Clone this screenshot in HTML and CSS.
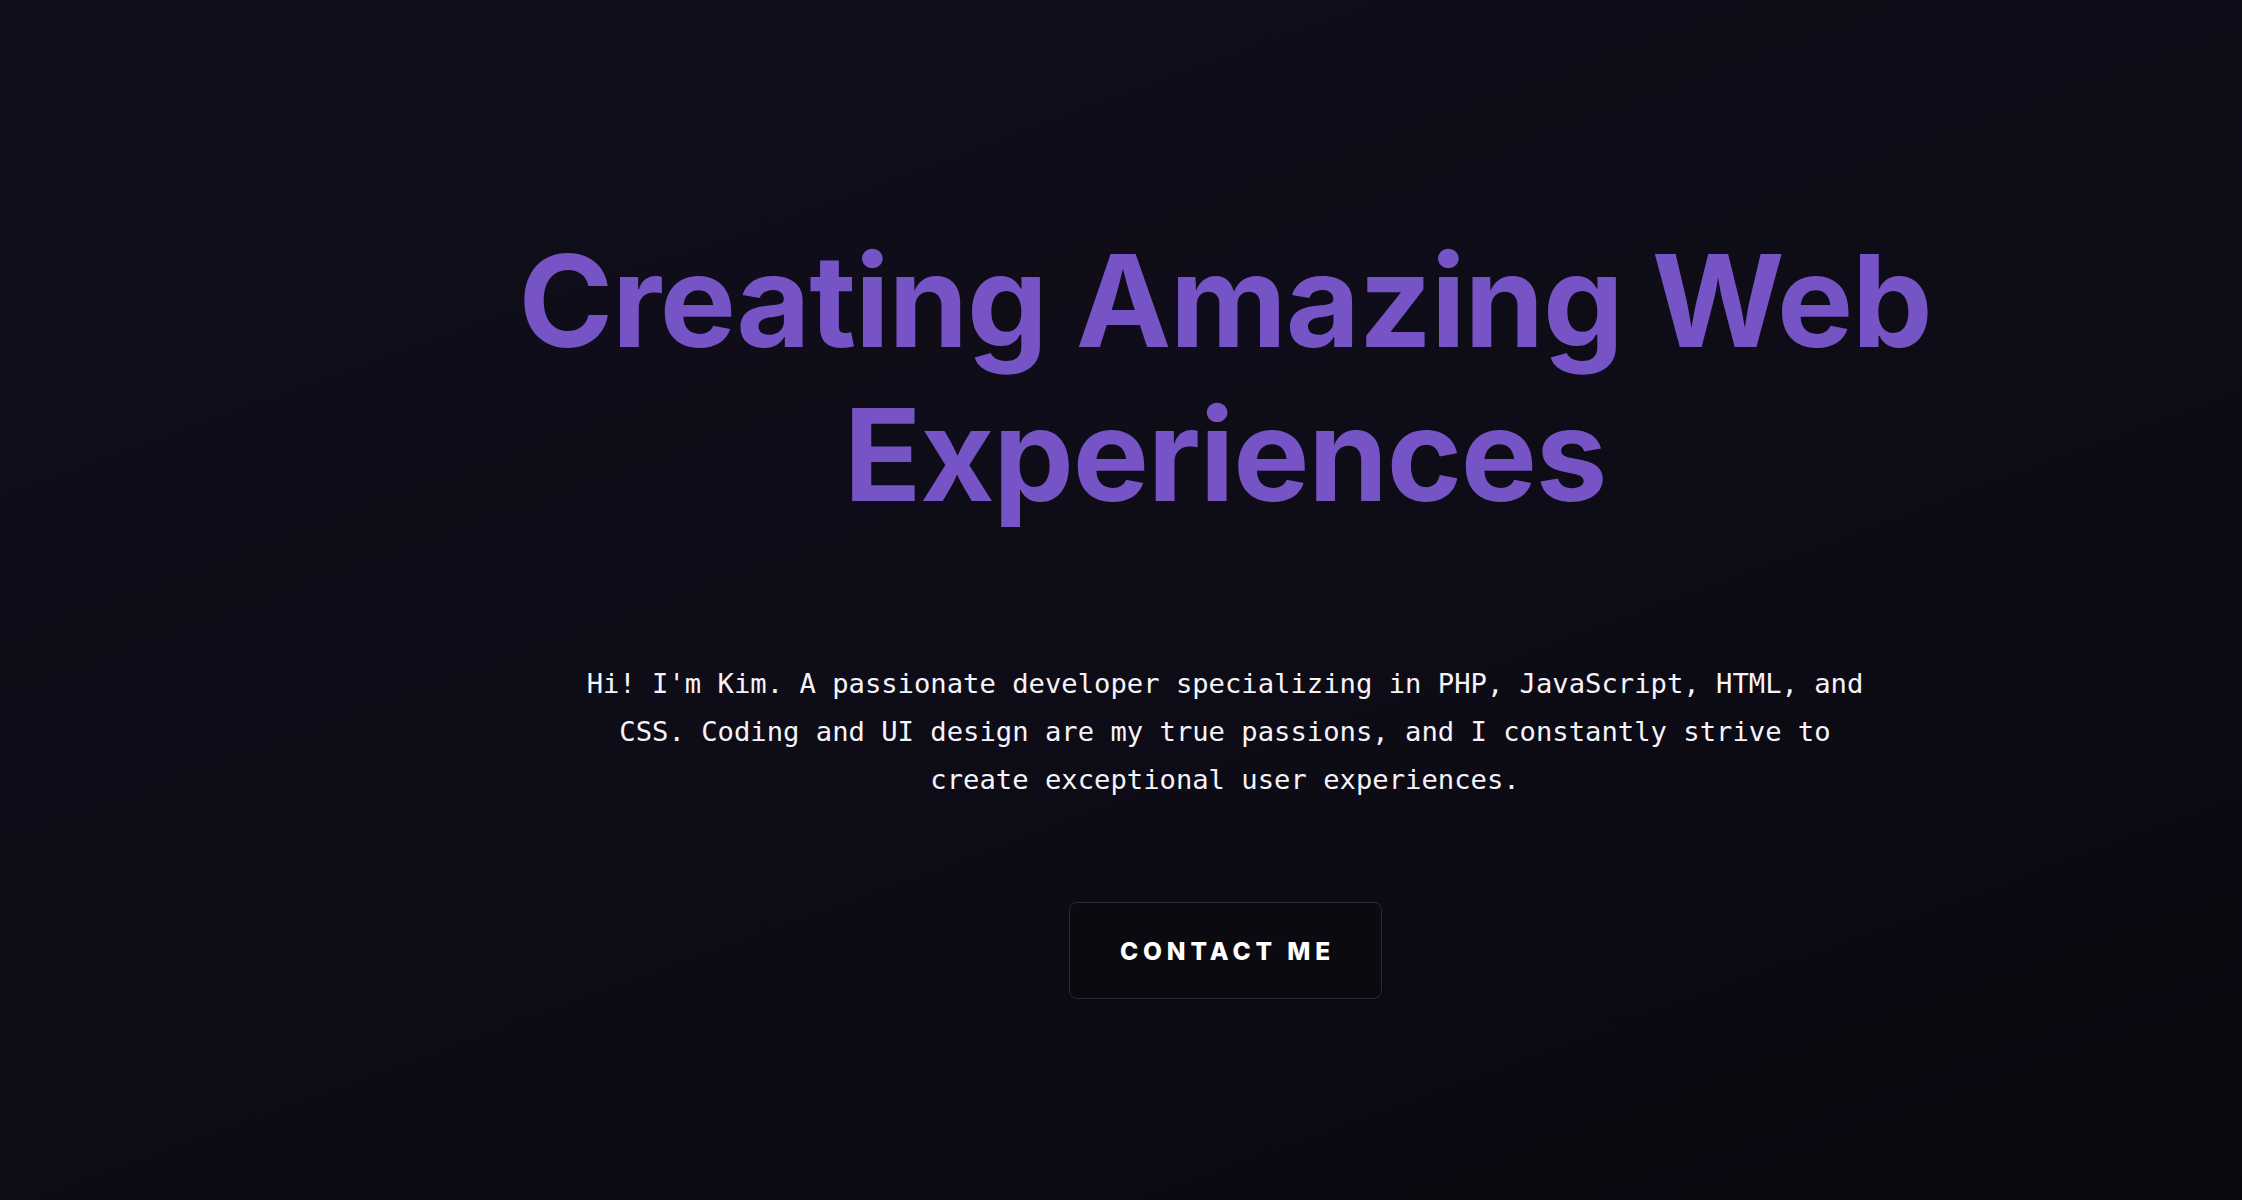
FILE: index.html
```html
<!DOCTYPE html>
<html lang="en">
<head>
<meta charset="utf-8">
<title>Kim — Developer</title>
<link rel="stylesheet" href="styles.css">
</head>
<body>
<main class="hero">
  <h1 class="hero-title">Creating Amazing Web Experiences</h1>
  <p class="hero-text">Hi! I'm Kim. A passionate developer specializing in PHP, JavaScript, HTML, and CSS. Coding and UI design are my true passions, and I constantly strive to create exceptional user experiences.</p>
  <a class="hero-button" href="#contact">CONTACT ME</a>
</main>
</body>
</html>
```

FILE: styles.css
```css
html, body {
  margin: 0;
  padding: 0;
  height: 100%;
}

body {
  background: linear-gradient(160deg, #110e1c 0%, #0e0c17 50%, #09080e 100%);
  color: #ffffff;
  font-family: Inter, "Noto Sans", sans-serif;
  overflow: hidden;
}

.hero {
  box-sizing: border-box;
  height: 1200px;
  padding: 224px 0 0 208px;
  display: flex;
  flex-direction: column;
  align-items: center;
  text-align: center;
}

.hero-title {
  margin: 0;
  max-width: 1500px;
  font-family: Inter, sans-serif;
  font-weight: 700;
  font-size: 128px;
  line-height: 1.2;
  letter-spacing: -1.2px;
  color: #7654c6;
}

.hero-text {
  margin: 129px 0 0;
  max-width: 1300px;
  font-family: "DejaVu Sans Mono", "Liberation Mono", monospace;
  font-size: 27.2px;
  line-height: 48px;
  color: #f6f4fa;
}

.hero-button {
  margin-top: 98px;
  box-sizing: border-box;
  width: 313px;
  height: 97px;
  display: flex;
  align-items: center;
  justify-content: center;
  padding-left: 5px;
  border: 1.5px solid #2a2832;
  border-radius: 8px;
  background: #0b0a11;
  color: #ffffff;
  text-decoration: none;
  font-family: Inter, sans-serif;
  font-weight: 800;
  font-size: 24.5px;
  letter-spacing: 0.2em;
}
```
